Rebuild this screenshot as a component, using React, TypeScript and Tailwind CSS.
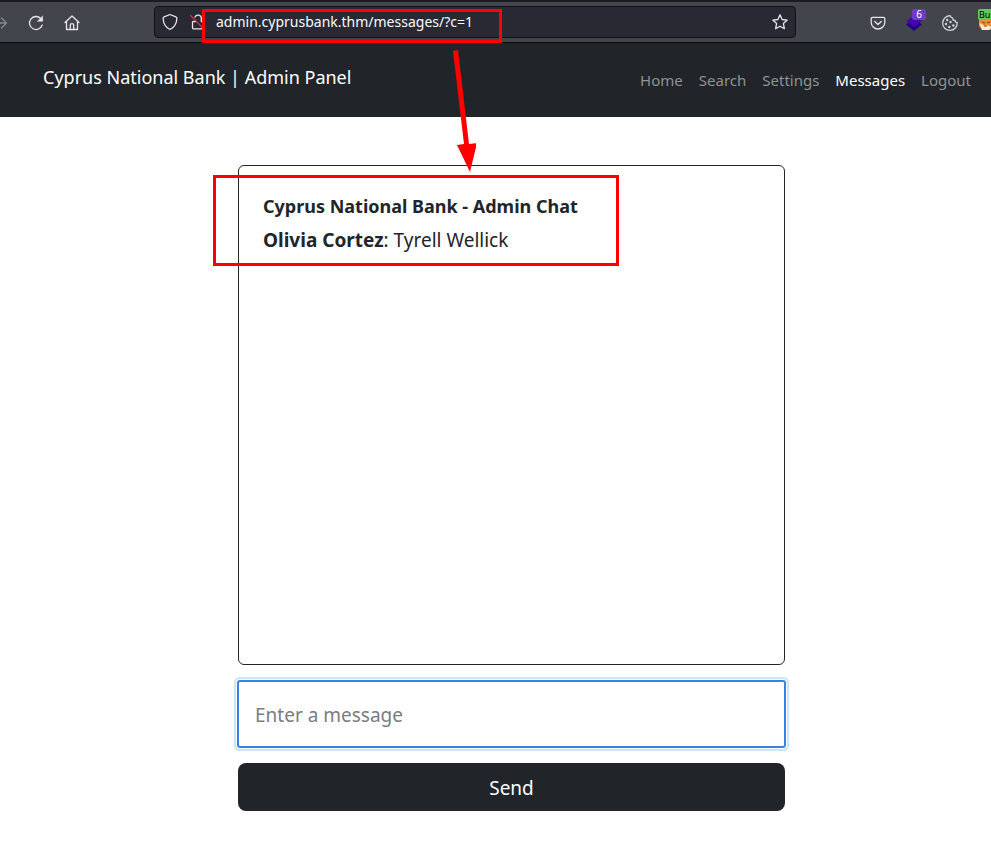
import React from "react";

const navItems = [
  { label: "Home", active: false },
  { label: "Search", active: false },
  { label: "Settings", active: false },
  { label: "Messages", active: true },
  { label: "Logout", active: false },
];

function IconButton({ label, children }: { label: string; children: React.ReactNode }) {
  return (
    <button type="button" aria-label={label} className="flex size-4 shrink-0 items-center justify-center">
      {children}
    </button>
  );
}

function Stroke({ children, color = "#e6e6ea" }: { children: React.ReactNode; color?: string }) {
  return (
    <svg viewBox="0 0 16 16" className="size-4 overflow-visible" fill="none" stroke={color} strokeWidth="1.3" strokeLinecap="round" strokeLinejoin="round">
      {children}
    </svg>
  );
}

function BrowserBar() {
  return (
    <div className="flex h-[43px] items-center border-t-2 border-b border-t-[#1c1b22] border-b-[#0c0c0d] bg-[#42454c] pt-px">
      <div className="flex w-[154px] shrink-0 items-center gap-5 text-white">
        <div className="-ml-2">
          <IconButton label="Forward">
            <Stroke color="#85878c">
              <path d="M1 8h13.5M9.5 3l5 5-5 5" />
            </Stroke>
          </IconButton>
        </div>
        <IconButton label="Reload">
          <Stroke>
            <path d="M14.200 10A6.500 6.500 0 1 1 12.700 3.500l1.200 1.200" />
            <path d="M14.600 1.300v4.900H9.700z" fill="#e6e6ea" strokeWidth="0.6" />
          </Stroke>
        </IconButton>
        <IconButton label="Home page">
          <Stroke>
            <path d="M1 7.500l7-6.500 7 6.500M2.500 6.500v8h11v-8M6.300 14.300v-4a1.700 1.700 0 0 1 3.400 0v4" />
          </Stroke>
        </IconButton>
      </div>

      <div className="relative -mt-px flex h-8 w-full max-w-[642px] items-center rounded border border-[#121218] bg-[#282933] px-[7px]">
        <IconButton label="Tracking protection">
          <Stroke>
            <path d="M8 .5l5.900 2.400c.6.2.9.7.9 1.300 0 5.200-2 8.900-6.800 11.300C3.200 13.100 1.200 9.400 1.200 4.200c0-.6.3-1.100.9-1.300z" />
          </Stroke>
        </IconButton>
        <div className="ml-3">
          <IconButton label="Connection not secure">
            <Stroke>
              <path d="M5.500 7.500H3.300c-.5 0-.8.3-.8.800v5.700c0 .5.3.8.8.8h9.400c.5 0 .8-.3.8-.8V8.300c0-.5-.3-.8-.8-.8h-1.400V4.300A3.300 3.300 0 0 0 5 3" />
              <path d="M.5 1.500l13 13" stroke="#e22850" />
            </Stroke>
          </IconButton>
        </div>
        <input
          type="text"
          aria-label="Address"
          defaultValue="admin.cyprusbank.thm/messages/?c=1"
          className="ml-[10px] h-6 min-w-0 flex-1 bg-transparent text-[14px] leading-6 text-[#fbfbfe] outline-none"
        />
        <IconButton label="Bookmark">
          <Stroke>
            <path d="M8 .8l2.100 4.700 5.100.6-3.800 3.500 1 5.100L8 12.200l-4.400 2.500 1-5.100L.8 6.100l5.100-.6z" />
          </Stroke>
        </IconButton>
        <div className="pointer-events-none absolute top-[2px] left-[47px] z-10 h-[34px] w-[300px] border-[3px] border-[#ff0000]" />
      </div>

      <div className="ml-auto flex shrink-0 items-center gap-5 overflow-hidden">
        <IconButton label="Pocket">
          <Stroke>
            <path d="M2.500 2.400h11c.8 0 1.300.6 1.300 1.300v3.500a6.800 6.800 0 0 1-13.600 0V3.700c0-.7.5-1.300 1.300-1.300zM4.800 6.500L8 9.500l3.200-3" />
          </Stroke>
        </IconButton>
        <div className="relative flex h-8 w-4 items-center">
          <IconButton label="Layers extension, 6 detected">
            <svg viewBox="0 0 16 16" className="size-4">
              <path d="M0 9.500L8 4l8 5.500L8 16z" fill="#1f0080" />
              <path d="M0 6l8-5 8 5-8 6z" fill="#4608ad" />
            </svg>
          </IconButton>
          <span className="absolute top-[2px] left-[6px] h-[11px] w-[14px] rounded-[2px] bg-[#6f3cc4] text-center text-[10px] leading-[11px] text-white">
            6
          </span>
        </div>
        <IconButton label="Cookie editor">
          <Stroke color="#d0d1d5">
            <path d="M8.500.8A7.300 7.300 0 1 0 15.200 7.500l-1.500-.3-.7-1.700-2-.5-.3-2-1.800-.7z" />
            <g fill="#d0d1d5" stroke="none">
              <circle cx="5.200" cy="5" r="1.200" />
              <circle cx="8.500" cy="7" r="1.200" />
              <circle cx="4" cy="9" r="1.200" />
              <circle cx="7.300" cy="12" r="1.200" />
              <circle cx="11.400" cy="10.500" r="1.200" />
            </g>
          </Stroke>
        </IconButton>
        <div className="relative flex h-8 w-[13px] items-center">
          <IconButton label="Proxy extension">
            <svg viewBox="0 0 16 16" className="size-4">
              <path d="M1 3l4 2h6l4-2v8l-3 4H4l-3-4z" fill="#f08b32" />
              <path d="M1.500 8l5 3 2-1 5 2-2 3H4z" fill="#fde8d5" />
              <path d="M4 7l3 1M9 8l3-1M6 11h3" stroke="#8a3c0e" />
            </svg>
          </IconButton>
          <span className="absolute top-[2px] left-0 h-[11px] w-[13px] rounded-l-[2px] bg-[#60cb5c] pl-px text-[9px] leading-[11px] text-black">
            Bu
          </span>
        </div>
      </div>
    </div>
  );
}

function Arrow() {
  return (
    <svg viewBox="0 0 22 124" className="pointer-events-none absolute top-[49px] left-[452px] z-10 h-[124px] w-[24px]" fill="#ff0000">
      <path d="M0 2l5-1 11 94 8-1-7 29L4 96l7-1z" />
    </svg>
  );
}

export default function App() {
  return (
    <div className="relative min-h-screen bg-white font-['Noto_Sans','Open_Sans',sans-serif] text-[#212529]">
      <BrowserBar />
      <Arrow />

      <header className="flex h-[74px] items-center justify-between bg-[#212529] pr-5 pl-[43px]">
        <a href="#" className="pb-[6px] text-[18px] leading-7 whitespace-nowrap text-white">
          Cyprus National Bank | Admin Panel
        </a>
        <nav className="flex gap-4 text-[15px] leading-6">
          {navItems.map((item) => (
            <a key={item.label} href="#" className={item.active ? "text-white" : "text-[#909294]"}>
              {item.label}
            </a>
          ))}
        </nav>
      </header>

      <main className="pt-12 pl-8">
        <div className="mx-auto flex w-full max-w-[547px] flex-col gap-4">
          <section className="relative h-[500px] rounded-md border border-[#212529] px-6 pt-[23px] text-[19px] leading-[34px]">
            <h1 className="text-[18px] font-bold">Cyprus National Bank - Admin Chat</h1>
            <p>
              <strong className="font-bold">Olivia Cortez</strong>: Tyrell Wellick
            </p>
            <div className="pointer-events-none absolute top-[9px] -left-[26px] h-[91px] w-[406px] border-[3px] border-[#ff0000]" />
          </section>
          <form className="flex flex-col gap-4" onSubmit={(event) => event.preventDefault()}>
            <input
              type="text"
              aria-label="Message"
              placeholder="Enter a message"
              className="h-[66px] w-full rounded-[2px] border border-[#3584e4] bg-white px-4 pt-[2px] text-[19px] shadow-[0_0_0_1px_#3584e4,0_0_0_2px_#ffffff,0_0_0_4px_#cce5ff] outline-none placeholder:text-[#7b7c7e]"
            />
            <button type="submit" className="h-12 w-full rounded-lg bg-[#212529] pt-[2px] text-[19px] text-white">
              Send
            </button>
          </form>
        </div>
      </main>
    </div>
  );
}
